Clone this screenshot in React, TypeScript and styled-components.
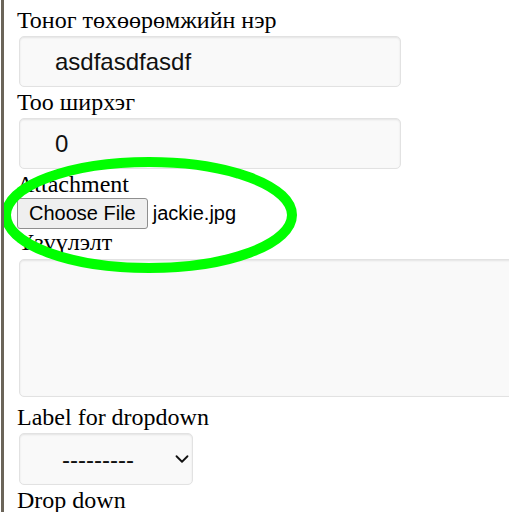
import styled, { createGlobalStyle } from "styled-components";
import { ChevronDown } from "lucide-react";

const GlobalStyle = createGlobalStyle`
  html, body {
    margin: 0;
    background: #fff;
  }
`;

const Frame = styled.div`
  position: relative;
  min-height: 512px;
  margin-left: 1px;
  border-left: 3px solid #6b6559;
  padding: 8px 0 0 13px;
  overflow: hidden;
`;

const Label = styled.label`
  display: block;
  font-family: "Liberation Serif", serif;
  font-size: 24px;
  line-height: 25px;
  color: #000;
`;

const fieldBase = `
  box-sizing: border-box;
  display: block;
  font-family: "Liberation Sans", Arial, sans-serif;
  font-size: 24px;
  color: #111;
  background: #f9f9f9;
  border: 1px solid #e2e2e2;
  border-radius: 5px;
  box-shadow: inset 0 1px 2px rgba(0, 0, 0, 0.09);
  outline: none;
`;

const TextInput = styled.input`
  ${fieldBase}
  width: 382px;
  height: 51px;
  margin: 3px 0 3px 2px;
  padding: 0 12px 0 35px;
`;

const FileRow = styled.div`
  display: flex;
  align-items: center;
  gap: 5px;
  margin: 1px 0;
  font-family: "Liberation Sans", Arial, sans-serif;
  font-size: 20px;
  color: #000;
`;

const FileButton = styled.button`
  box-sizing: border-box;
  height: 31px;
  padding: 0 11px;
  font-family: "Liberation Sans", Arial, sans-serif;
  font-size: 20px;
  color: #000;
  background: #efefef;
  border: 1px solid #8f8f8f;
  border-radius: 3px;
`;

const TextArea = styled.textarea`
  ${fieldBase}
  width: 500px;
  height: 138px;
  margin: 4px 0 8px 2px;
  resize: none;
`;

const SelectWrap = styled.div`
  position: relative;
  width: 174px;
  margin: 3px 0 3px 2px;
`;

const Select = styled.select`
  ${fieldBase}
  appearance: none;
  width: 174px;
  height: 52px;
  padding: 0 0 0 42px;
`;

const Chevron = styled(ChevronDown)`
  position: absolute;
  left: 152px;
  top: 15px;
  pointer-events: none;
  color: #111;
`;

const Annotation = styled.svg`
  position: absolute;
  left: -4px;
  top: 0;
  pointer-events: none;
`;

export default function App() {
  return (
    <>
      <GlobalStyle />
      <Frame>
        <Label>Тоног төхөөрөмжийн нэр</Label>
        <TextInput defaultValue="asdfasdfasdf" />
        <Label>Тоо ширхэг</Label>
        <TextInput defaultValue="0" />
        <Label>Attachment</Label>
        <FileRow>
          <FileButton type="button">Choose File</FileButton>
          <span>jackie.jpg</span>
        </FileRow>
        <Label>Үзүүлэлт</Label>
        <TextArea />
        <Label>Label for dropdown</Label>
        <SelectWrap>
          <Select defaultValue="">
            <option value="">---------</option>
          </Select>
          <Chevron size={22} strokeWidth={2} />
        </SelectWrap>
        <Label>Drop down</Label>
        <Annotation width="509" height="512">
          <ellipse
            cx="149"
            cy="215"
            rx="143"
            ry="53"
            fill="none"
            stroke="#00ff00"
            strokeWidth="10"
          />
        </Annotation>
      </Frame>
    </>
  );
}
